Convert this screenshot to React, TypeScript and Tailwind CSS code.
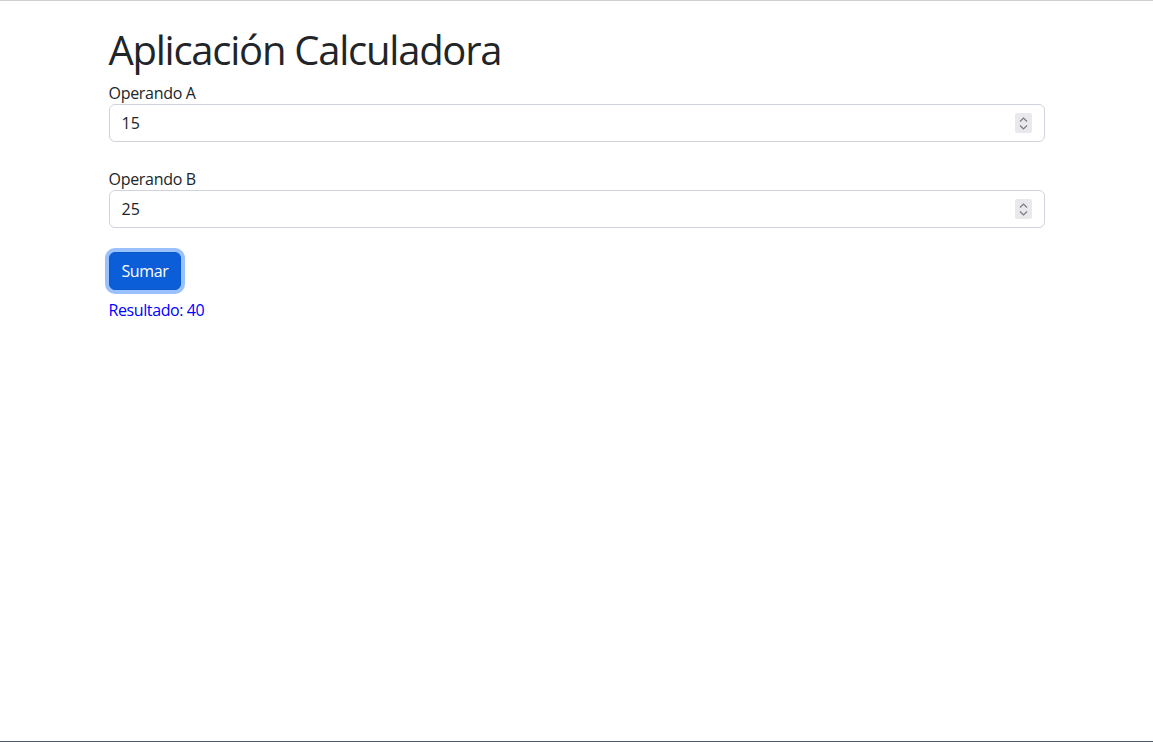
import React from 'react';

function Spinner() {
  return (
    <div className="absolute right-[13px] top-1/2 -translate-y-1/2 w-[17px] h-[20px] bg-[#e9e9ed] flex flex-col items-center justify-center gap-[3px] rounded-[2px]">
      <svg width="9" height="5" viewBox="0 0 9 5" fill="none">
        <path d="M1 4.5 L4.5 1 L8 4.5" stroke="#7a7a80" strokeWidth="1.2" />
      </svg>
      <svg width="9" height="5" viewBox="0 0 9 5" fill="none">
        <path d="M1 0.5 L4.5 4 L8 0.5" stroke="#7a7a80" strokeWidth="1.2" />
      </svg>
    </div>
  );
}

function Field({ label, value }: { label: string; value: string }) {
  return (
    <div className="mb-6">
      <label className="block leading-6 pt-px -mb-px text-[#212529] tracking-[-0.3px]">{label}</label>
      <div className="relative">
        <input
          type="text"
          defaultValue={value}
          className="block w-full h-[38px] px-3 border border-[#ced4da] rounded-[6px] text-[#212529] bg-white outline-none"
        />
        <Spinner />
      </div>
    </div>
  );
}

export default function App() {
  return (
    <div className="h-[742px] flex flex-col bg-white font-['Open_Sans',sans-serif] text-base">
      <div className="h-px bg-[#cfcfcf]" />
      <div className="flex-1">
        <div className="w-[960px] mx-auto px-3 pt-[23px]">
          <h1 className="text-[40px] leading-[48px] font-normal text-[#212529] pt-[2px] mb-[6px] tracking-[-1.25px]">
            Aplicación Calculadora
          </h1>
          <Field label="Operando A" value="15" />
          <Field label="Operando B" value="25" />
          <button className="h-[38px] px-3 rounded-[6px] bg-[#0b5ed7] text-white border border-[#0a58ca] tracking-[-0.4px] shadow-[0_0_0_4px_rgba(49,132,253,0.5)]">
            Sumar
          </button>
          <p className="mt-2 leading-6 text-[#0000ff] tracking-[-0.4px]">Resultado: 40</p>
        </div>
      </div>
      <div className="h-px bg-[#4a5868]" />
    </div>
  );
}
